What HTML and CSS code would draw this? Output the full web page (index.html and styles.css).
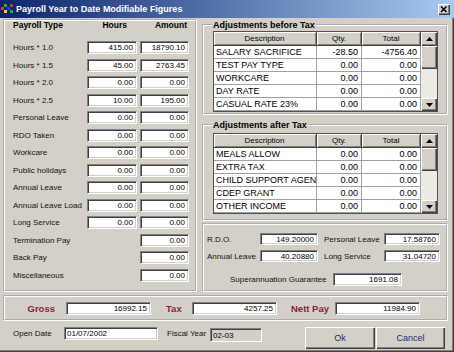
FILE: index.html
```html
<!DOCTYPE html>
<html lang="en">
<head>
  <meta charset="UTF-8">
  <title>Payroll Year to Date Modifiable Figures</title>
  <link rel="stylesheet" href="styles.css">
</head>
<body>
  <div class="window">
    <!-- Title bar -->
    <div class="titlebar">
      <svg class="app-icon" viewBox="0 0 12 12">
        <rect x="0" y="4" width="3" height="3" fill="#e03020"/>
        <rect x="3" y="1" width="3" height="3" fill="#30b030"/>
        <rect x="3" y="7" width="3" height="3" fill="#f0d020"/>
        <rect x="6" y="4" width="3" height="3" fill="#2040e0"/>
        <rect x="9" y="1" width="3" height="3" fill="#e03020"/>
        <rect x="9" y="7" width="3" height="3" fill="#30b030"/>
      </svg>
      <span class="title">Payroll Year to Date Modifiable Figures</span>
      <div class="close-btn">
        <svg viewBox="0 0 12 11"><path d="M3 2.5 L8.5 8 M8.5 2.5 L3 8" stroke="#000" stroke-width="1.6"/></svg>
      </div>
    </div>

    <div class="dialog">
      <div class="top">
        <!-- Payroll types -->
        <div class="panel payroll">
          <div class="pay-head">
            <span>Payroll Type</span>
            <span class="h-hours">Hours</span>
            <span class="h-amount">Amount</span>
          </div>
          <div class="pay-grid">
            <label>Hours * 1.0</label><input class="fld" value="415.00"><input class="fld" value="18790.10">
            <label>Hours * 1.5</label><input class="fld" value="45.00"><input class="fld" value="2763.45">
            <label>Hours * 2.0</label><input class="fld" value="0.00"><input class="fld" value="0.00">
            <label>Hours * 2.5</label><input class="fld" value="10.00"><input class="fld" value="195.00">
            <label>Personal Leave</label><input class="fld" value="0.00"><input class="fld" value="0.00">
            <label>RDO Taken</label><input class="fld" value="0.00"><input class="fld" value="0.00">
            <label>Workcare</label><input class="fld" value="0.00"><input class="fld" value="0.00">
            <label>Public holidays</label><input class="fld" value="0.00"><input class="fld" value="0.00">
            <label>Annual Leave</label><input class="fld" value="0.00"><input class="fld" value="0.00">
            <label>Annual Leave Load</label><input class="fld" value="0.00"><input class="fld" value="0.00">
            <label>Long Service</label><input class="fld" value="0.00"><input class="fld" value="0.00">
            <label>Termination Pay</label><span></span><input class="fld" value="0.00">
            <label>Back Pay</label><span></span><input class="fld" value="0.00">
            <label>Miscellaneous</label><span></span><input class="fld" value="0.00">
          </div>
        </div>

        <div class="right-col">
          <!-- Adjustments before tax -->
          <fieldset class="group adj-before">
            <legend>Adjustments before Tax</legend>
            <div class="grid-wrap">
              <div class="adj">
                <div class="adj-row head"><div>Description</div><div>Qty.</div><div>Total</div></div>
                <div class="adj-row"><div>SALARY SACRIFICE</div><div>-28.50</div><div>-4756.40</div></div>
                <div class="adj-row"><div>TEST PAY TYPE</div><div>0.00</div><div>0.00</div></div>
                <div class="adj-row"><div>WORKCARE</div><div>0.00</div><div>0.00</div></div>
                <div class="adj-row"><div>DAY RATE</div><div>0.00</div><div>0.00</div></div>
                <div class="adj-row"><div>CASUAL RATE 23%</div><div>0.00</div><div>0.00</div></div>
              </div>
              <div class="vscroll">
                <div class="sb-btn"><svg viewBox="0 0 7 4"><path d="M3.5 0 L7 4 L0 4 Z"/></svg></div>
                <div class="sb-thumb"></div>
                <div class="sb-track"></div>
                <div class="sb-btn down"><svg viewBox="0 0 7 4"><path d="M0 0 L7 0 L3.5 4 Z"/></svg></div>
              </div>
            </div>
          </fieldset>

          <!-- Adjustments after tax -->
          <fieldset class="group adj-after">
            <legend>Adjustments after Tax</legend>
            <div class="grid-wrap">
              <div class="adj">
                <div class="adj-row head"><div>Description</div><div>Qty.</div><div>Total</div></div>
                <div class="adj-row"><div>MEALS ALLOW</div><div>0.00</div><div>0.00</div></div>
                <div class="adj-row"><div>EXTRA TAX</div><div>0.00</div><div>0.00</div></div>
                <div class="adj-row"><div>CHILD SUPPORT AGENCY</div><div>0.00</div><div>0.00</div></div>
                <div class="adj-row"><div>CDEP GRANT</div><div>0.00</div><div>0.00</div></div>
                <div class="adj-row"><div>OTHER INCOME</div><div>0.00</div><div>0.00</div></div>
              </div>
              <div class="vscroll">
                <div class="sb-btn"><svg viewBox="0 0 7 4"><path d="M3.5 0 L7 4 L0 4 Z"/></svg></div>
                <div class="sb-thumb"></div>
                <div class="sb-track"></div>
                <div class="sb-btn down"><svg viewBox="0 0 7 4"><path d="M0 0 L7 0 L3.5 4 Z"/></svg></div>
              </div>
            </div>
          </fieldset>

          <!-- Leave balances -->
          <div class="panel leave">
            <div class="leave-grid">
              <label>R.D.O.</label><input class="fld" value="149.20000">
              <label class="l2">Personal Leave</label><input class="fld" value="17.58760">
              <label>Annual Leave</label><input class="fld" value="40.20880">
              <label class="l2">Long Service</label><input class="fld" value="31.04720">
            </div>
            <div class="super-row">
              <label>Superannuation Guarantee</label><input class="fld" value="1691.08">
            </div>
          </div>
        </div>
      </div>

      <!-- Totals -->
      <div class="panel totals">
        <span class="tot-label gross">Gross</span><input class="fld wide" value="16992.15">
        <span class="tot-label tax">Tax</span><input class="fld wide" value="4257.25">
        <span class="tot-label nett">Nett Pay</span><input class="fld wide" value="11984.90">
      </div>

      <!-- Footer -->
      <div class="footer">
        <label class="f-open">Open Date</label><input class="fld left date" value="01/07/2002">
        <label class="f-fiscal">Fiscal Year</label><input class="fld left fiscal" value="02-03" readonly>
        <button class="btn ok">Ok</button>
        <button class="btn">Cancel</button>
      </div>
    </div>
  </div>
</body>
</html>
```

FILE: styles.css
```css
body {
  margin: 0;
  background: #fff;
  font-family: "Liberation Sans", Arial, sans-serif;
  color: #000;
}

.window {
  width: 454px;
  height: 352px;
  background: #d4d0c8;
  overflow: hidden;
}

/* Title bar */
.titlebar {
  height: 18px;
  display: flex;
  align-items: center;
  padding-left: 1px;
  background: linear-gradient(to right, #0a246a, #a6caf0);
}

.app-icon {
  width: 12px;
  height: 12px;
  margin-right: 3px;
}

.title {
  flex: 1;
  color: #fff;
  font-size: 9px;
  font-weight: bold;
  white-space: nowrap;
}

.close-btn {
  width: 12px;
  height: 11px;
  margin-right: 4px;
  background: #d4d0c8;
  box-shadow: inset 1px 1px #fff, inset -1px -1px #404040, inset -2px -2px #808080;
}

.close-btn svg {
  display: block;
  width: 12px;
  height: 11px;
}

/* Dialog body */
.dialog {
  height: 334px;
  box-sizing: border-box;
  padding: 1px 5px 0 3px;
  border-right: 1px solid #404040;
  border-bottom: 1px solid #404040;
  box-shadow: inset -1px -1px #808080;
}

.top {
  display: flex;
  gap: 5px;
  height: 273px;
}

.panel {
  box-sizing: border-box;
  border: 2px groove #fff;
}

/* Input fields */
.fld {
  box-sizing: border-box;
  width: 100%;
  height: 13px;
  margin: 0;
  padding: 0 3px 0 2px;
  border: 1px solid;
  border-color: #808080 #fff #fff #808080;
  box-shadow: inset 1px 1px #404040, inset -1px -1px #d4d0c8;
  background: #fff;
  font-family: "Liberation Sans", Arial, sans-serif;
  font-size: 8px;
  color: #000;
  text-align: right;
  outline: none;
}

.fld.left {
  text-align: left;
}

label {
  font-size: 8px;
  line-height: 13px;
  white-space: nowrap;
  color: #111;
}

/* Payroll panel */
.payroll {
  width: 194px;
  height: 273px;
}

.pay-head,
.pay-grid {
  display: grid;
  grid-template-columns: 71px 50px 49px;
  column-gap: 3px;
  padding-left: 8px;
}

.pay-head {
  font-size: 8.5px;
  font-weight: bold;
  line-height: 9px;
}

.pay-head .h-hours {
  text-align: right;
  padding-right: 10px;
}

.pay-head .h-amount {
  text-align: right;
  padding-right: 2px;
}

.pay-grid {
  margin-top: 11px;
  grid-auto-rows: 13px;
  row-gap: 4.5px;
}

/* Right column */
.right-col {
  width: 246px;
  margin-top: 1px;
  display: flex;
  flex-direction: column;
}

.group {
  box-sizing: border-box;
  margin: 0;
  padding: 1px 8px 0 9px;
  min-width: 0;
  border: 2px groove #fff;
}

.group legend {
  padding: 0 1px;
  margin-left: -1px;
  font-size: 9px;
  font-weight: bold;
  line-height: 10px;
}

.adj-before {
  height: 95px;
}

.adj-after {
  height: 101px;
  margin-top: 5px;
}

.adj-after .grid-wrap {
  margin-top: 2px;
}

.grid-wrap {
  display: flex;
  width: 225px;
  height: 81px;
  box-sizing: border-box;
  border: 1px solid #505050;
  background: #fff;
}

.adj {
  width: 207px;
}

.adj-row {
  display: grid;
  grid-template-columns: 103px 45px 59px;
  height: 13px;
  font-size: 9px;
  line-height: 12px;
}

.adj-row div {
  box-sizing: border-box;
  padding: 0 3px;
  border-right: 1px solid #a0a0a0;
  border-bottom: 1px solid #a0a0a0;
  text-align: right;
  white-space: nowrap;
  overflow: hidden;
}

.adj-row div:first-child {
  text-align: left;
  padding-left: 2px;
}

.adj-row.head {
  height: 14px;
  font-size: 8px;
  line-height: 13px;
}

.adj-row.head div {
  text-align: center;
  background: #d4d0c8;
  border-right: 1px solid #404040;
  border-bottom: 1px solid #404040;
  box-shadow: inset 1px 1px #fff, inset -1px -1px #808080;
}

/* Scroll bar */
.vscroll {
  width: 16px;
  display: flex;
  flex-direction: column;
  background: #ecebe6;
}

.sb-btn,
.sb-thumb {
  background: #d4d0c8;
  box-shadow: inset 1px 1px #fff, inset -1px -1px #404040, inset -2px -2px #808080;
}

.sb-btn {
  height: 14px;
  display: flex;
  align-items: center;
  justify-content: center;
}

.sb-btn.down {
  height: 13px;
}

.sb-btn svg {
  width: 7px;
  height: 4px;
}

.sb-thumb {
  height: 23px;
}

.sb-track {
  flex: 1;
}

/* Leave balances */
.leave {
  height: 69px;
  margin-top: 2px;
  padding: 8px 0 0 3px;
}

.leave-grid {
  display: grid;
  grid-template-columns: 53px 58px 66px 56px;
  grid-auto-rows: 12px;
  row-gap: 5px;
  align-items: center;
}

.leave-grid .fld {
  height: 12px;
}

.leave-grid .l2 {
  padding-left: 6px;
}

.super-row {
  display: flex;
  align-items: center;
  margin-top: 11px;
  padding-left: 23px;
}

.super-row label {
  width: 103px;
}

.super-row .fld {
  width: 69px;
}

/* Totals */
.totals {
  height: 26px;
  margin-top: 3px;
  display: flex;
  align-items: center;
}

.tot-label {
  box-sizing: border-box;
  font-size: 9.5px;
  font-weight: bold;
  color: #8c1c3c;
}

.tot-label.gross {
  width: 50px;
  margin-right: 11px;
  text-align: right;
}

.tot-label.tax {
  width: 41px;
  padding-left: 15px;
}

.tot-label.nett {
  width: 58px;
  padding-left: 14px;
}

.fld.wide {
  width: 85px;
}

/* Footer */
.footer {
  display: flex;
  align-items: flex-start;
  padding: 6px 0 0 10px;
}

.f-open {
  width: 51px;
}

.fld.date {
  width: 94px;
}

.f-fiscal {
  width: 52px;
  padding-left: 9px;
  box-sizing: border-box;
}

.fld.fiscal {
  width: 52px;
  height: 14px;
  margin-top: 1px;
  background: #d4d0c8;
}

.btn {
  width: 69px;
  height: 22px;
  margin-left: 1px;
  padding: 0;
  border: none;
  background: #d4d0c8;
  box-shadow: inset 1px 1px #fff, inset -1px -1px #404040, inset -2px -2px #808080;
  font-family: "Liberation Sans", Arial, sans-serif;
  font-size: 9px;
  color: #23287a;
}

.btn.ok {
  width: 70px;
  margin-left: 43px;
}
```
